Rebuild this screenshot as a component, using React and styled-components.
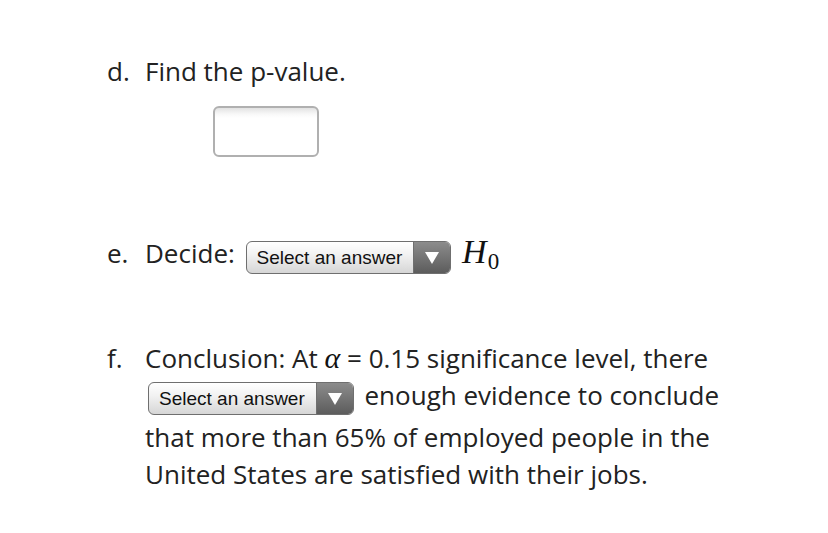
import React from "react";
import styled, { createGlobalStyle } from "styled-components";

const Global = createGlobalStyle`
  html, body { margin: 0; padding: 0; background: #fff; }
  body { font-family: "Open Sans", "Noto Sans", sans-serif; color: #222; }
`;

const Page = styled.div`
  padding: 53px 0 0 107px;
  font-size: 26px;
  line-height: 37px;
`;

const Item = styled.div`
  display: grid;
  grid-template-columns: 38px 600px;
  margin-top: ${(p) => p.$gap || 0}px;
`;

const Marker = styled.div``;

const Body = styled.div``;

const Line = styled.p`
  margin: 0;
`;

const AnswerBox = styled.div`
  box-sizing: border-box;
  width: 106px;
  height: 51px;
  margin: 16px 0 0 68px;
  border: 2px solid #b0b0b0;
  border-radius: 6px;
  background: linear-gradient(#e2e2e2 0px, #f8f8f8 6px, #fff 10px);
`;

const Select = styled.span`
  display: inline-flex;
  box-sizing: border-box;
  height: 33px;
  margin: 2px 4px 4px ${(p) => p.$ml ?? 4}px;
  vertical-align: ${(p) => p.$va ?? 0}px;
  border: 1px solid #6f6f6f;
  border-radius: 6px;
  overflow: hidden;
  font-family: "Liberation Sans", Arial, sans-serif;
  font-size: 19px;
  line-height: 21px;
  color: #111;
  background: linear-gradient(#ffffff, #f2f2f2 40%, #d6d6d6);
`;

const SelectLabel = styled.span`
  display: flex;
  align-items: center;
  padding: 0 11px 0 10px;
`;

const SelectArrow = styled.span`
  display: flex;
  align-items: center;
  justify-content: center;
  width: 36px;
  border-left: 1px solid #6f6f6f;
  background: linear-gradient(#8c8c8c, #5c5c5c);
  &::after {
    content: "";
    width: 0;
    height: 0;
    border-left: 7px solid transparent;
    border-right: 7px solid transparent;
    border-top: 12px solid #fff;
  }
`;

const MathVar = styled.span`
  font-family: "Liberation Serif", "DejaVu Serif", serif;
  font-style: italic;
  font-size: ${(p) => p.$size || 34}px;
  line-height: 20px;
  color: #111;
`;

const Sub = styled.sub`
  font-style: normal;
  font-size: 23px;
  vertical-align: -6px;
  line-height: 0;
  margin-left: 1px;
`;

const Dropdown = ({ ml, va }) => (
  <Select $ml={ml} $va={va}>
    <SelectLabel>Select an answer</SelectLabel>
    <SelectArrow />
  </Select>
);

export default function App() {
  return (
    <>
      <Global />
      <Page>
        <Item>
          <Marker>d.</Marker>
          <Body>
            <Line>Find the p-value.</Line>
            <AnswerBox />
          </Body>
        </Item>
        <Item $gap={78}>
          <Marker>e.</Marker>
          <Body>
            <Line>
              Decide: <Dropdown ml={4} va={-1} />{" "}
              <MathVar>
                H<Sub>0</Sub>
              </MathVar>
            </Line>
          </Body>
        </Item>
        <Item $gap={62}>
          <Marker>f.</Marker>
          <Body>
            <Line>
              Conclusion: At <MathVar $size={30}>α</MathVar> = 0.15 significance level, there{" "}
              <Dropdown ml={3} /> enough evidence to conclude that more than 65% of employed
              people in the United States are satisfied with their jobs.
            </Line>
          </Body>
        </Item>
      </Page>
    </>
  );
}
